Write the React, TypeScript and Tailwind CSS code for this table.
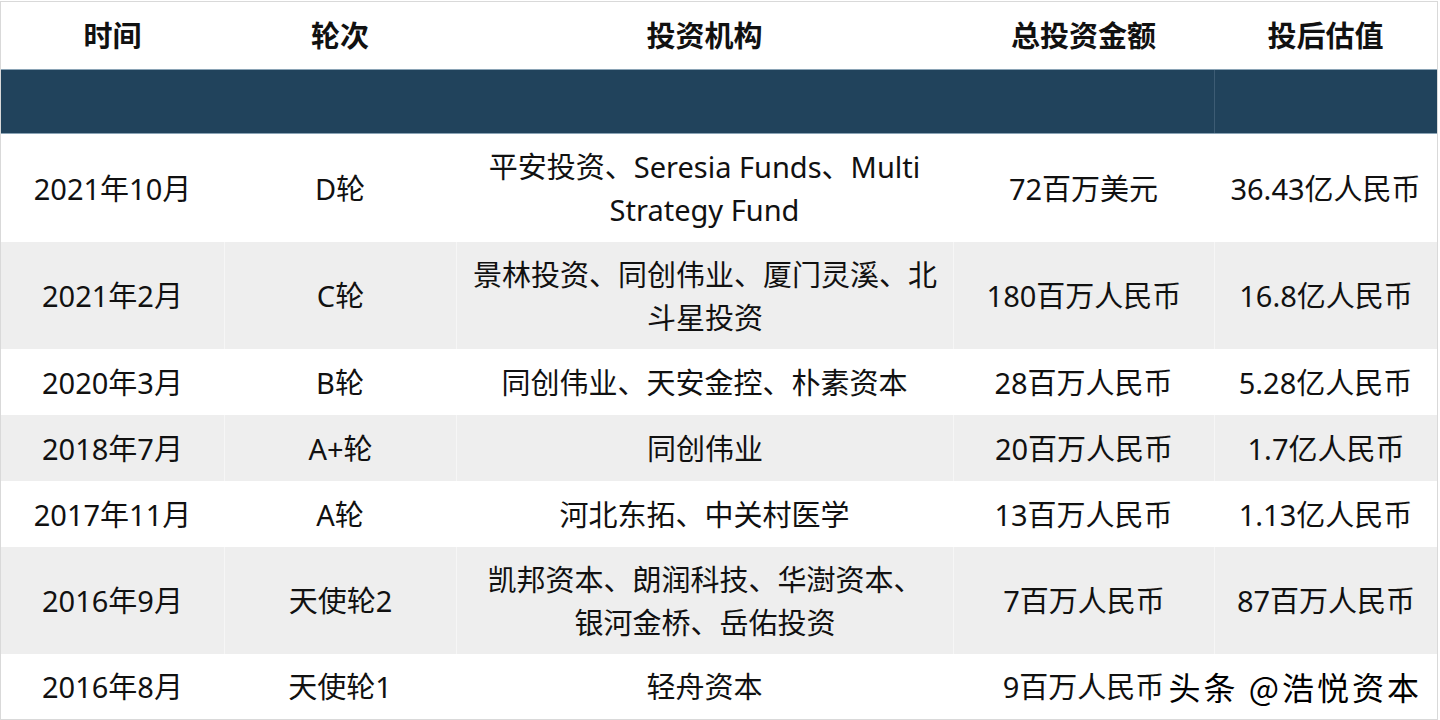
const rows = [
  { date: "2021年10月", round: "D轮", investors: ["平安投资、Seresia Funds、Multi", "Strategy Fund"], amount: "72百万美元", value: "36.43亿人民币", h: "h-[108px]" },
  { date: "2021年2月", round: "C轮", investors: ["景林投资、同创伟业、厦门灵溪、北", "斗星投资"], amount: "180百万人民币", value: "16.8亿人民币", h: "h-[107px]" },
  { date: "2020年3月", round: "B轮", investors: ["同创伟业、天安金控、朴素资本"], amount: "28百万人民币", value: "5.28亿人民币", h: "h-[66px]" },
  { date: "2018年7月", round: "A+轮", investors: ["同创伟业"], amount: "20百万人民币", value: "1.7亿人民币", h: "h-[66px]" },
  { date: "2017年11月", round: "A轮", investors: ["河北东拓、中关村医学"], amount: "13百万人民币", value: "1.13亿人民币", h: "h-[66px]" },
  { date: "2016年9月", round: "天使轮2", investors: ["凯邦资本、朗润科技、华澍资本、", "银河金桥、岳佑投资"], amount: "7百万人民币", value: "87百万人民币", h: "h-[107px]" },
  { date: "2016年8月", round: "天使轮1", investors: ["轻舟资本"], amount: "9百万人民币", value: "", h: "h-[65px]" },
];

const cols = "grid grid-cols-[223px_232px_497px_261px_1fr]";

export default function App() {
  return (
    <div className="relative h-[720px] w-[1440px] overflow-hidden bg-white font-['Noto_Sans','Noto_Sans_CJK_SC',sans-serif] text-[29px] text-[#111]">
      <div className="mt-px mr-[2px] border border-[#d9d9d9]">
        <div className={`${cols} h-[67px] items-center text-center font-bold`}>
          <div>时间</div>
          <div>轮次</div>
          <div>投资机构</div>
          <div>总投资金额</div>
          <div>投后估值</div>
        </div>
        <div className={`${cols} h-[65px] border-y border-[#8aa3b5] bg-[#21435c]`}>
          <div />
          <div />
          <div />
          <div />
          <div className="border-l border-[#3d5c74]" />
        </div>
        {rows.map((r, i) => {
          const gray = i % 2 === 1;
          const cell = `flex items-center justify-center text-center ${gray ? "border-l border-[#f6f6f6]" : ""}`;
          return (
            <div key={r.date} className={`${cols} ${r.h} ${gray ? "bg-[#eeeeee]" : "bg-white"} leading-[43px]`}>
              <div className="flex items-center justify-center">{r.date}</div>
              <div className={cell}>{r.round}</div>
              <div className={`${cell} flex-col`}>
                {r.investors.map((l) => (
                  <span key={l}>{l}</span>
                ))}
              </div>
              <div className={cell}>{r.amount}</div>
              <div className={cell}>{r.value}</div>
            </div>
          );
        })}
      </div>
      <div className="absolute right-[18px] bottom-[14px] font-['Noto_Sans_CJK_SC',sans-serif] text-[32px] leading-[40px] tracking-[3px] text-black [-webkit-text-stroke:3px_white] [paint-order:stroke_fill]">
        头条 @浩悦资本
      </div>
    </div>
  );
}
